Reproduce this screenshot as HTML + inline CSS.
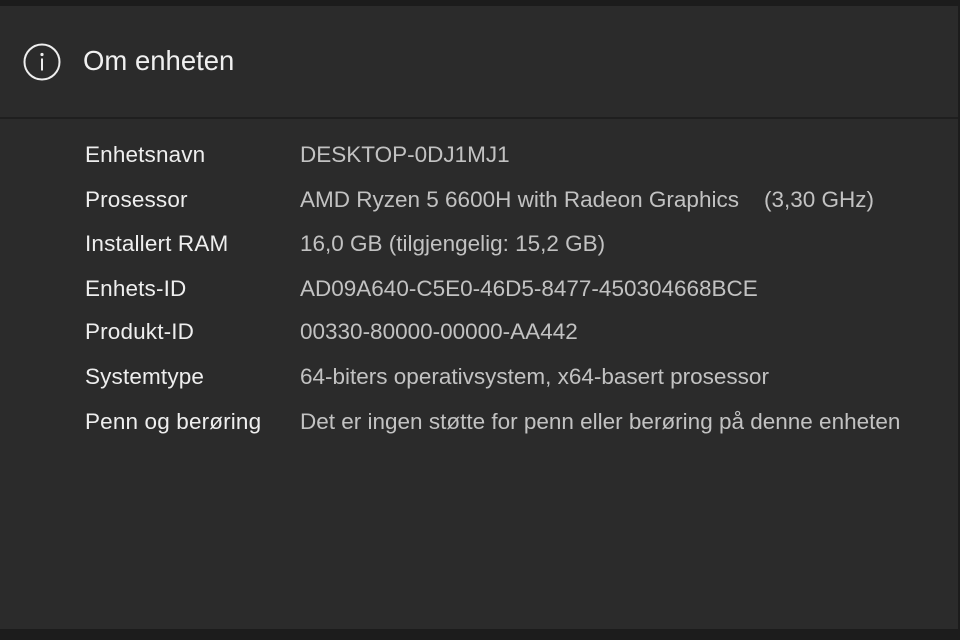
<!DOCTYPE html>
<html><head><style>
body{margin:0;width:960px;height:640px;background:#1c1c1c;font-family:"Liberation Sans",sans-serif;overflow:hidden;position:relative}
.panel{position:absolute;left:0;top:6px;width:958px;height:623px;background:#2b2b2b}
.hdr{position:absolute;left:0;top:0;width:100%;height:111px;border-bottom:2px solid #1f1f1f}
.title{position:absolute;left:83px;top:39px;font-size:27.5px;color:#f0f0f0}
.row{position:absolute;left:85px;font-size:22.5px;color:#eeeeee;white-space:pre;letter-spacing:0.15px}
.val{position:absolute;left:215px;color:#c2c2c2;letter-spacing:0}
</style></head><body>
<div class="panel">
<div class="hdr">
<svg style="position:absolute;left:22px;top:36px" width="40" height="40" viewBox="0 0 40 40"><circle cx="20" cy="20" r="17.5" fill="none" stroke="#eee" stroke-width="2"/><circle cx="20" cy="12.5" r="1.6" fill="#eee"/><rect x="19" y="16.5" width="2" height="12" fill="#eee"/></svg>
<div class="title">Om enheten</div>
</div>
<div class="row" style="top:136px">Enhetsnavn<span class="val">DESKTOP-0DJ1MJ1</span></div>
<div class="row" style="top:181px">Prosessor<span class="val">AMD Ryzen 5 6600H with Radeon Graphics    (3,30 GHz)</span></div>
<div class="row" style="top:225px">Installert RAM<span class="val">16,0 GB (tilgjengelig: 15,2 GB)</span></div>
<div class="row" style="top:270px">Enhets-ID<span class="val">AD09A640-C5E0-46D5-8477-450304668BCE</span></div>
<div class="row" style="top:313px">Produkt-ID<span class="val">00330-80000-00000-AA442</span></div>
<div class="row" style="top:358px">Systemtype<span class="val">64-biters operativsystem, x64-basert prosessor</span></div>
<div class="row" style="top:403px">Penn og berøring<span class="val">Det er ingen støtte for penn eller berøring på denne enheten</span></div>
</div>
</body></html>
